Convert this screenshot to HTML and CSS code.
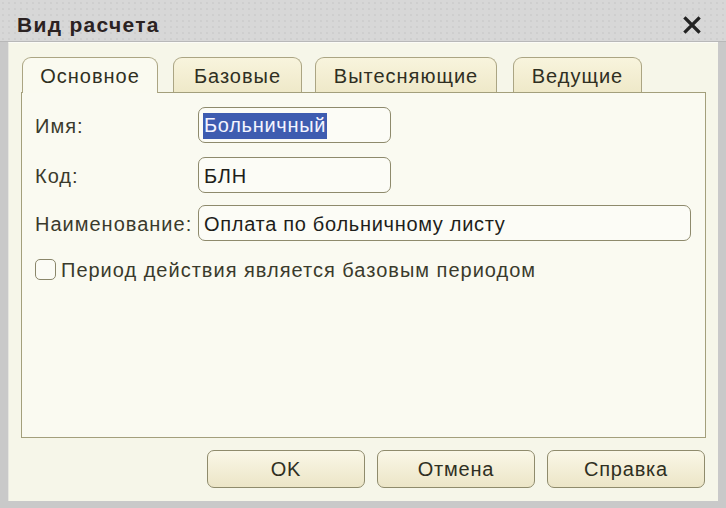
FILE: index.html
```html
<!DOCTYPE html>
<html lang="ru">
<head>
<meta charset="utf-8">
<title>Вид расчета</title>
<link rel="stylesheet" href="styles.css">
</head>
<body>
<div class="window">
  <div class="titlebar">
    <div class="title">Вид расчета</div>
    <div class="close">
      <svg width="18" height="18" viewBox="0 0 18 18"><path d="M2.5 2.5 L15.5 15.5 M15.5 2.5 L2.5 15.5" stroke="#222" stroke-width="3.2" stroke-linecap="square"/></svg>
    </div>
  </div>
  <div class="content">
    <div class="tabs">
      <div class="tab active t1">Основное</div>
      <div class="tab t2">Базовые</div>
      <div class="tab t3">Вытесняющие</div>
      <div class="tab t4">Ведущие</div>
    </div>
    <div class="panel">
      <div class="row r1">
        <div class="label">Имя:</div>
        <div class="input short"><span class="sel">Больничный</span></div>
      </div>
      <div class="row r2">
        <div class="label">Код:</div>
        <div class="input short">БЛН</div>
      </div>
      <div class="row r3">
        <div class="label">Наименование:</div>
        <div class="input long">Оплата по больничному листу</div>
      </div>
      <div class="check">
        <div class="box"></div>
        <div class="ctext">Период действия является базовым периодом</div>
      </div>
    </div>
    <div class="buttons">
      <div class="btn">OK</div>
      <div class="btn">Отмена</div>
      <div class="btn">Справка</div>
    </div>
  </div>
</div>
</body>
</html>
```
FILE: styles.css
```css
html, body {
  margin: 0;
  padding: 0;
}
body {
  width: 726px;
  height: 508px;
  overflow: hidden;
  font-family: "Liberation Sans", Arial, sans-serif;
  color: #333326;
}
.window {
  width: 726px;
  height: 508px;
  box-sizing: border-box;
  background: #c9c9c9;
  display: flex;
  flex-direction: column;
  padding: 0 8px 8px 8px;
}
.titlebar {
  height: 42px;
  flex: none;
  display: flex;
  align-items: center;
  justify-content: space-between;
  margin: 0 -8px;
  padding: 9px 25px 0 17px;
  box-sizing: border-box;
  background-color: #d7d7d7;
  background-image: radial-gradient(circle, #cecece 0.7px, transparent 1.1px);
  background-size: 6px 6px;
  border-bottom: 1px solid #b8b8b8;
}
.title {
  font-size: 21px;
  font-weight: bold;
  letter-spacing: 1.3px;
  color: #2b2222;
}
.close {
  width: 18px;
  height: 18px;
}
.close svg {
  display: block;
}
.content {
  flex: 1;
  background: #f6f6e9;
  border-left: 1px solid #e6e6e0;
  border-top: 1px solid #fbfbf6;
  padding: 14px 11px 13px 12px;
  display: flex;
  flex-direction: column;
}
.tabs {
  display: flex;
  height: 35px;
  align-items: flex-end;
  position: relative;
  z-index: 1;
}
.tab {
  box-sizing: border-box;
  height: 35px;
  border: 1px solid #aba583;
  border-bottom: none;
  border-radius: 9px 9px 0 0;
  background: linear-gradient(#f8f4dd, #efe9c9);
  font-size: 20px;
  letter-spacing: 1px;
  display: flex;
  justify-content: center;
  align-items: center;
  padding-top: 2px;
  color: #2f2f22;
}
.tab.active {
  background: #fafaf0;
  height: 36px;
  margin-bottom: -1px;
}
.t1 { width: 136px; margin-left: 1px; }
.t2 { width: 129px; margin-left: 15px; }
.t3 { width: 182px; margin-left: 13px; }
.t4 { width: 129px; margin-left: 16px; }
.panel {
  width: 685px;
  height: 346px;
  box-sizing: border-box;
  border: 1px solid #a39f7c;
  background: #fafaf1;
  padding: 14px 14px 0 13px;
}
.row {
  display: flex;
  align-items: center;
  height: 36px;
}
.r2 { margin-top: 14px; }
.r3 { margin-top: 12px; }
.label {
  width: 163px;
  font-size: 20px;
  letter-spacing: 1px;
  color: #3a3a2c;
  padding-top: 2px;
}
.input {
  box-sizing: border-box;
  height: 36px;
  border: 1px solid #8e8a6c;
  border-radius: 7px;
  background: #fcfcf6;
  font-size: 20px;
  letter-spacing: 0.7px;
  display: flex;
  align-items: center;
  padding: 2px 0 0 5px;
  color: #1e1e1a;
}
.short { width: 193px; }
.long { width: 493px; }
.sel {
  background: #3e5cb0;
  color: #f4f4ff;
  padding: 1px 1px 2px 1px;
  margin-left: -1px;
}
.check {
  display: flex;
  align-items: center;
  margin-top: 16px;
  height: 24px;
}
.box {
  width: 21px;
  height: 21px;
  box-sizing: border-box;
  border: 1px solid #8a866a;
  border-radius: 5px;
  background: #fbfbf5;
  margin-right: 5px;
}
.ctext {
  font-size: 20px;
  letter-spacing: 1px;
  color: #3a3a2c;
  padding-top: 2px;
}
.buttons {
  display: flex;
  justify-content: flex-end;
  gap: 12px;
  margin-top: 12px;
  width: 684px;
}
.btn {
  box-sizing: border-box;
  width: 158px;
  height: 38px;
  border: 1px solid #8f8b6c;
  border-radius: 7px;
  background: linear-gradient(#faf7e7, #ece5c7);
  font-size: 20px;
  letter-spacing: 0.8px;
  display: flex;
  justify-content: center;
  align-items: center;
  color: #2f2f22;
}
```
